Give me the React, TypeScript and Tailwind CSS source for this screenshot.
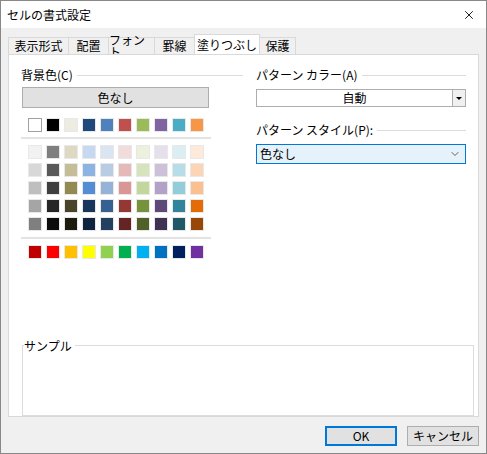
import { X, ChevronDown } from "lucide-react";

const theme = [
  ["#FFFFFF", "#000000", "#EEECE1", "#1F497D", "#4F81BD", "#C0504D", "#9BBB59", "#8064A2", "#4BACC6", "#F79646"],
];
const tints = [
  ["#F2F2F2", "#7F7F7F", "#DDD9C3", "#C6D9F0", "#DBE5F1", "#F2DCDB", "#EBF1DD", "#E5E0EC", "#DBEEF3", "#FDEADA"],
  ["#D8D8D8", "#595959", "#C4BD97", "#8DB3E2", "#B8CCE4", "#E5B9B7", "#D7E3BC", "#CCC1D9", "#B7DDE8", "#FBD5B5"],
  ["#BFBFBF", "#3F3F3F", "#938953", "#548DD4", "#95B3D7", "#D99694", "#C3D69B", "#B2A2C7", "#92CDDC", "#FAC08F"],
  ["#A5A5A5", "#262626", "#494429", "#17365D", "#366092", "#953734", "#76923C", "#5F497A", "#31859B", "#E36C09"],
  ["#7F7F7F", "#0C0C0C", "#1D1B10", "#0F243E", "#244061", "#632423", "#4F6128", "#3F3151", "#205867", "#974806"],
];
const standard = [
  ["#C00000", "#FF0000", "#FFC000", "#FFFF00", "#92D050", "#00B050", "#00B0F0", "#0070C0", "#002060", "#7030A0"],
];

const tabs = [
  { t: "表示形式", w: "w-[61px]" },
  { t: "配置", w: "w-[41px]" },
  { t: "フォント", w: "w-[47px]" },
  { t: "罫線", w: "w-[41px]" },
  { t: "塗りつぶし", w: "w-[66px]" },
  { t: "保護", w: "w-[37px]" },
];

function SwatchRow({ colors, first }: { colors: string[]; first?: boolean }) {
  return (
    <div className="flex gap-[6px]">
      {colors.map((c, i) => (
        <div
          key={c + i}
          className={`w-[12px] h-[12px] ${first && i === 0 ? "outline outline-1 outline-[#a0a0a0]" : "outline outline-1 outline-[#e8e8e8]"}`}
          style={{ backgroundColor: c }}
        />
      ))}
    </div>
  );
}

function Legend({ text }: { text: string }) {
  return (
    <div className="flex items-center gap-[4px]">
      <span className="whitespace-nowrap">{text}</span>
      <div className="flex-1 h-px bg-[#dcdcdc]" />
    </div>
  );
}

export default function App() {
  return (
    <div
      className="w-[487px] h-[454px] bg-[#f0f0f0] flex flex-col text-[12px] text-black overflow-hidden border border-[#888]"
      style={{ fontFamily: '"Noto Sans CJK JP", "Noto Sans", sans-serif' }}
    >
      <div className="h-[27px] bg-white flex items-center justify-between pl-[6px] pr-[10px]">
        <span className="text-[12px]">セルの書式設定</span>
        <X className="w-[14px] h-[14px]" strokeWidth={1.5} />
      </div>

      <div className="flex pl-[7px] mt-[8px] h-[18px] items-end">
        {tabs.map((tab, i) => (
          <div
            key={tab.t}
            className={`${tab.w} justify-center border-t border-l border-r border-[#d9d9d9] -mr-px leading-none flex items-center ${
              i === 4 ? "bg-white h-[20px] relative z-10 border-b-0" : "bg-[#f0f0f0] h-[17px]"
            }`}
          >
            {tab.t}
          </div>
        ))}
      </div>

      <div className="mx-[7px] h-[363px] bg-white border border-[#d9d9d9] flex flex-col px-[12px] pt-[11px]">
        <div className="flex gap-[13px]">
          <div className="w-[222px] flex flex-col">
            <Legend text="背景色(C)" />
            <div className="mt-[3px] mx-[1px] h-[21px] w-[187px] bg-[#e1e1e1] border border-[#adadad] flex items-center justify-center">
              色なし
            </div>
            <div className="mt-[11px] pl-[8px]">
              <SwatchRow colors={theme[0]} first />
            </div>
            <div className="mt-[6px] mb-[7px] w-[190px] h-[2px] bg-[#e3e3e3]" />
            <div className="pl-[8px] flex flex-col gap-[6px]">
              {tints.map((r, i) => (
                <SwatchRow key={i} colors={r} />
              ))}
            </div>
            <div className="my-[7px] w-[190px] h-[2px] bg-[#e3e3e3]" />
            <div className="pl-[8px]">
              <SwatchRow colors={standard[0]} />
            </div>
          </div>
          <div className="flex-1 flex flex-col">
            <Legend text="パターン カラー(A)" />
            <div className="mt-[5px] h-[18px] flex border border-[#adadad] bg-white">
              <div className="flex-1 flex items-center justify-center">自動</div>
              <div className="w-[13px] border-l border-[#adadad] bg-[#f0f0f0] flex items-center justify-center">
                <div className="w-0 h-0 border-l-[3px] border-r-[3px] border-t-[3px] border-l-transparent border-r-transparent border-t-black" />
              </div>
            </div>
            <div className="mt-[14px]">
              <Legend text="パターン スタイル(P):" />
            </div>
            <div className="mt-[5px] h-[20px] flex items-center justify-between border border-[#0078d7] bg-[#e5f1fb] pl-[3px] pr-[4px]">
              <span>色なし</span>
              <ChevronDown className="w-[12px] h-[12px] text-[#333]" strokeWidth={1.5} />
            </div>
          </div>
        </div>

        <div className="mt-[87px] mx-[1px] h-[73px] w-[452px] border border-[#dcdcdc] relative">
          <span className="absolute -top-[9px] left-[1px] bg-white pr-[3px]">サンプル</span>
        </div>
      </div>

      <div className="flex justify-end gap-[10px] pr-[7px] mt-[9px]">
        <div className="w-[72px] h-[20px] border-2 border-[#0078d7] bg-[#e1e1e1] flex items-center justify-center">OK</div>
        <div className="w-[72px] h-[20px] border border-[#adadad] bg-[#e1e1e1] flex items-center justify-center">キャンセル</div>
      </div>
    </div>
  );
}
